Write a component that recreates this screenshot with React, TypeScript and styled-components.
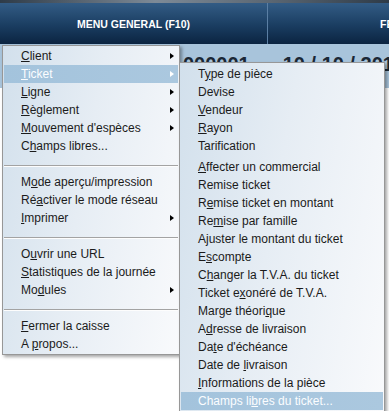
import styled, { createGlobalStyle } from "styled-components";

const GlobalStyle = createGlobalStyle`
  html, body {
    margin: 0;
    padding: 0;
    background: #fff;
  }
  body {
    font-family: "Liberation Sans", Arial, sans-serif;
  }
`;

const Screen = styled.div`
  position: relative;
  width: 389px;
  height: 411px;
  overflow: hidden;
  background: #fff;
`;

const TitleStrip = styled.div`
  height: 3px;
  background: linear-gradient(to right, #2e3b48, #7d8a97 40%, #5a6672 70%, #2e3b48);
`;

const Header = styled.div`
  height: 41px;
  display: grid;
  grid-template-columns: 267px 1px 1fr;
  background: linear-gradient(to bottom, #335c85 0%, #1a3d61 55%, #0b2441 100%);
  color: #fff;
  font-weight: bold;
  font-size: 10.5px;
`;

const HeaderCell = styled.div<{ $offset?: number }>`
  display: flex;
  align-items: center;
  justify-content: ${(p) => (p.$offset ? "flex-start" : "center")};
  padding-left: ${(p) => p.$offset ?? 0}px;
  white-space: nowrap;
  overflow: hidden;
`;

const HeaderDivider = styled.div`
  background: #5b7fa4;
`;

const TicketBand = styled.div`
  height: 44px;
  box-sizing: border-box;
  padding: 10px 0 0 183px;
  display: flex;
  gap: 33px;
  background: #a8c4db;
  color: #1a2735;
  font-size: 20px;
  font-weight: bold;
  line-height: 20px;
  white-space: nowrap;
`;

const MenuPanel = styled.div`
  position: absolute;
  box-sizing: border-box;
  border: 1px solid #979797;
  background: linear-gradient(100deg, #d2e0ec 0%, #e6edf4 45%, #f9fafc 100%);
  box-shadow: 2px 2px 3px rgba(0, 0, 0, 0.35);
`;

const MainMenu = styled(MenuPanel)`
  left: 2px;
  top: 45px;
  width: 178px;
  padding: 1px;
  z-index: 1;
`;

const SubMenu = styled(MenuPanel)`
  left: 179px;
  top: 62px;
  width: 206px;
  padding: 2px 1px 1px;
  z-index: 2;
`;

const MenuItem = styled.div<{ $active?: boolean; $gap?: number }>`
  height: 18px;
  margin-top: ${(p) => p.$gap ?? 0}px;
  display: flex;
  align-items: center;
  justify-content: space-between;
  padding: 0 4px 0 17px;
  font-size: 12px;
  line-height: 18px;
  white-space: nowrap;
  color: ${(p) => (p.$active ? "#fbfdff" : "#1b1b1b")};
  background: ${(p) =>
    p.$active ? "linear-gradient(to right, #a3c3dc, #abc8df)" : "transparent"};
`;

const Separator = styled.div`
  height: 1px;
  margin: 10px 0 6px;
  background: #a3a3a3;
  border-bottom: 1px solid #fdfdfd;
`;

const SubArrow = styled.span<{ $active?: boolean }>`
  width: 0;
  height: 0;
  border-left: 4px solid ${(p) => (p.$active ? "#fff" : "#000")};
  border-top: 3.5px solid transparent;
  border-bottom: 3.5px solid transparent;
`;

type Entry = { label: string; sub?: boolean; active?: boolean; gap?: number } | "sep";

const mainEntries: Entry[] = [
  { label: "&Client", sub: true },
  { label: "&Ticket", sub: true, active: true },
  { label: "&Ligne", sub: true },
  { label: "&Règlement", sub: true },
  { label: "&Mouvement d'espèces", sub: true },
  { label: "C&hamps libres..." },
  "sep",
  { label: "M&ode aperçu/impression" },
  { label: "Ré&activer le mode réseau" },
  { label: "&Imprimer", sub: true },
  "sep",
  { label: "O&uvrir une URL" },
  { label: "&Statistiques de la journée" },
  { label: "Mo&dules", sub: true },
  "sep",
  { label: "&Fermer la caisse" },
  { label: "A &propos..." },
];

const ticketEntries: Entry[] = [
  { label: "T&ype de pièce" },
  { label: "Devise" },
  { label: "&Vendeur" },
  { label: "&Rayon" },
  { label: "Tarification" },
  { label: "&Affecter un commercial", gap: 3 },
  { label: "Remise ticket" },
  { label: "R&emise ticket en montant" },
  { label: "Re&mise par famille" },
  { label: "Ajuster le montant du ticket" },
  { label: "E&scompte" },
  { label: "C&hanger la T.V.A. du ticket" },
  { label: "Ticket e&xonéré de T.V.A." },
  { label: "Marge théori&que" },
  { label: "A&dresse de livraison" },
  { label: "Da&te d'échéance" },
  { label: "Date de &livraison" },
  { label: "&Informations de la pièce" },
  { label: "Champs li&bres du ticket...", active: true },
];

// "&" marks the keyboard mnemonic, as in the Windows resource
const Label = ({ text }: { text: string }) => {
  const i = text.indexOf("&");
  if (i < 0) return <span>{text}</span>;
  return (
    <span>
      {text.slice(0, i)}
      <u>{text[i + 1]}</u>
      {text.slice(i + 2)}
    </span>
  );
};

const MenuEntries = ({ entries }: { entries: Entry[] }) => (
  <>
    {entries.map((entry, index) =>
      entry === "sep" ? (
        <Separator key={`sep${index}`} />
      ) : (
        <MenuItem key={entry.label} $active={entry.active} $gap={entry.gap}>
          <Label text={entry.label} />
          {entry.sub && <SubArrow $active={entry.active} />}
        </MenuItem>
      )
    )}
  </>
);

const App = () => {
  return (
    <Screen>
      <GlobalStyle />
      <TitleStrip />
      <Header>
        <HeaderCell>MENU GENERAL (F10)</HeaderCell>
        <HeaderDivider />
        <HeaderCell $offset={112}>FERMER (F12)</HeaderCell>
      </Header>
      <TicketBand>
        <span>000001</span>
        <span>10 / 10 / 2013</span>
      </TicketBand>

      <MainMenu>
        <MenuEntries entries={mainEntries} />
      </MainMenu>
      <SubMenu>
        <MenuEntries entries={ticketEntries} />
      </SubMenu>
    </Screen>
  );
};

export default App;
